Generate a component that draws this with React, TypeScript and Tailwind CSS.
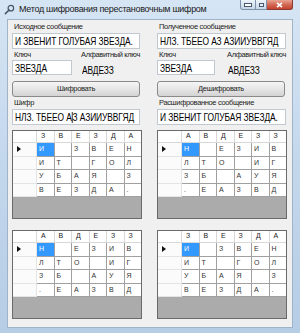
import React from 'react';

const font = { fontFamily: '"Liberation Sans", Arial, sans-serif' };

interface GridProps {
    headers: string[];
    rows: string[][];
}

const CipherGrid: React.FC<GridProps> = ({ headers, rows }) => {
    return (
        <div className="h-[89px] w-[130px] border border-[#6a6a6a] bg-[#ababab] flex flex-col overflow-hidden">
            <div className="flex h-[12px] bg-white text-[7px] text-[#222]">
                <div className="w-[24px] border-r border-b border-[#d8d8d8]"></div>
                {headers.map((h, i) => (
                    <div key={i} className="flex-1 flex items-center pl-[4px] border-r border-b border-[#d8d8d8] last:border-r-0">
                        {h}
                    </div>
                ))}
            </div>
            {rows.map((row, r) => (
                <div key={r} className="flex h-[13.5px] bg-white text-[7px] text-[#333]">
                    <div className="w-[24px] flex items-center pl-[4px] border-r border-b border-[#e4e4e4] bg-[#fbfbfb]">
                        {r === 0 && (
                            <svg width="4" height="6" viewBox="0 0 4 6">
                                <path d="M0 0 L4 3 L0 6 Z" fill="#111" />
                            </svg>
                        )}
                    </div>
                    {row.map((c, i) => {
                        const selected = r === 0 && i === 0;
                        return (
                            <div
                                key={i}
                                className={
                                    selected
                                        ? 'flex-1 flex items-center pl-[2px] border-r border-b border-[#a0a0a0] bg-[#3399ff] text-white'
                                        : 'flex-1 flex items-center pl-[2px] border-r border-b border-[#a0a0a0] last:border-r-0'
                                }
                            >
                                {c}
                            </div>
                        );
                    })}
                </div>
            ))}
        </div>
    );
};

const Label: React.FC<{ children: React.ReactNode; className?: string }> = ({ children, className }) => (
    <div className={'text-[7.5px] leading-[10px] text-[#222] tracking-[-0.35px] whitespace-nowrap ' + (className || '')}>{children}</div>
);

// the original window text is horizontally squeezed, so the big text is narrowed with scale-x
const Squeezed: React.FC<{ children: React.ReactNode }> = ({ children }) => (
    <span className="inline-block origin-left scale-x-[0.8] text-[10.5px] leading-[12px] tracking-[-0.1px] whitespace-nowrap">{children}</span>
);

const TextBox: React.FC<{ value: string; className?: string; caretAt?: number }> = ({ value, className, caretAt }) => (
    <div className={'bg-white border border-[#c2c8d0] flex items-center pl-[2px] text-black leading-[12px] overflow-hidden ' + (className || '')}>
        <Squeezed>
            {caretAt !== undefined ? (
                <>
                    {value.slice(0, caretAt)}
                    <span className="inline-block w-[1px] h-[11px] bg-black align-middle"></span>
                    {value.slice(caretAt)}
                </>
            ) : (
                value
            )}
        </Squeezed>
    </div>
);

const WinButton: React.FC<{ children: React.ReactNode }> = ({ children }) => (
    <div className="h-[16px] w-[128px] rounded-[3px] border border-[#8a8a8a] bg-gradient-to-b from-[#f6f6f6] via-[#e6e6e6] to-[#d3d3d3] flex items-center justify-center text-[7.5px] leading-[10px] text-[#222] tracking-[-0.3px]">
        {children}
    </div>
);

const grid1 = {
    headers: ['З', 'В', 'Е', 'З', 'Д', 'А'],
    rows: [
        ['И', '', 'З', 'В', 'Е', 'Н'],
        ['И', 'Т', '', 'Г', 'О', 'Л'],
        ['У', 'Б', 'А', 'Я', '', 'З'],
        ['В', 'Е', 'З', 'Д', 'А', '.'],
    ],
};

const grid2 = {
    headers: ['А', 'В', 'Д', 'Е', 'З', 'З'],
    rows: [
        ['Н', '', 'Е', 'З', 'И', 'В'],
        ['Л', 'Т', 'О', '', 'И', 'Г'],
        ['З', 'Б', '', 'А', 'У', 'Я'],
        ['.', 'Е', 'А', 'З', 'В', 'Д'],
    ],
};

export default function App() {
    return (
        <div style={font} className="w-[300px] h-[333px] flex flex-col bg-gradient-to-b from-[#d6e5f4] via-[#c3d7ec] to-[#b6cde6] overflow-hidden">
            {/* title bar */}
            <div className="h-[19px] flex items-start relative">
                <div className="flex items-center h-[18px] pl-[4px] gap-[4px]">
                    <svg width="11" height="11" viewBox="0 0 12 12">
                        <circle cx="7.5" cy="4.5" r="3" fill="none" stroke="#445566" strokeWidth="1.3" />
                        <path d="M5.5 6.5 L1.5 10.5" stroke="#445566" strokeWidth="1.6" strokeLinecap="round" />
                    </svg>
                    <span className="text-[9px] leading-[12px] text-[#1a1a1a] tracking-[-0.3px]">Метод шифрования перестановочным шифром</span>
                </div>
                <div className="absolute top-0 left-[240px] flex">
                    <div className="w-[16px] h-[10px] rounded-bl-[3px] border border-t-0 border-[#7f93ab] bg-gradient-to-b from-[#eef4fa] to-[#c6d6e8] flex items-end justify-center pb-[2px]">
                        <div className="w-[6px] h-[2px] bg-white border border-[#4a5a6e] box-content"></div>
                    </div>
                    <div className="w-[11px] h-[10px] border border-t-0 border-l-0 border-[#7f93ab] bg-gradient-to-b from-[#eef4fa] to-[#c6d6e8] flex items-center justify-center">
                        <div className="w-[5px] h-[4px] border border-[#4a5a6e] bg-[#e9eff6]"></div>
                    </div>
                    <div className="w-[26px] h-[10px] rounded-br-[3px] border border-t-0 border-l-0 border-[#8a3b33] bg-gradient-to-b from-[#e8a493] via-[#d26a55] to-[#c5402d] flex items-center justify-center">
                        <svg width="7" height="6" viewBox="0 0 7 6">
                            <path d="M1 0.8 L6 5.2 M6 0.8 L1 5.2" stroke="white" strokeWidth="1.6" />
                        </svg>
                    </div>
                </div>
            </div>

            {/* client area */}
            <div className="flex-1 mx-[7px] mb-[5px] bg-[#f0f0f0] border border-[#9fb3c9] pl-[4px] pt-[2px] flex flex-col">
                <div className="flex gap-[16px]">
                    {/* left column */}
                    <div className="w-[129px] flex flex-col">
                        <Label className="pl-[2px] h-[11px]">Исходное сообщение</Label>
                        <TextBox value="И ЗВЕНИТ ГОЛУБАЯ ЗВЕЗДА." className="h-[16px] w-[128px]" />
                        <div className="flex mt-[1px]">
                            <Label className="w-[69px] pl-[2px] h-[10px]">Ключ</Label>
                            <Label className="h-[10px]">Алфавитный ключ</Label>
                        </div>
                        <div className="flex items-center h-[15px]">
                            <TextBox value="ЗВЕЗДА" className="h-[15px] w-[60px]" />
                            <div className="ml-[10px] leading-[12px] pt-[3px]">
                                <Squeezed>АВДЕЗЗ</Squeezed>
                            </div>
                        </div>
                        <div className="mt-[6px]">
                            <WinButton>Шифровать</WinButton>
                        </div>
                        <Label className="pl-[2px] h-[12px] pt-[1px]">Шифр</Label>
                        <TextBox value="НЛЗ. ТБЕЕО АЗ АЗИИУВВГЯД" caretAt={12} className="h-[16px] w-[128px]" />
                    </div>
                    {/* right column */}
                    <div className="w-[129px] flex flex-col">
                        <Label className="pl-[2px] h-[11px]">Полученное сообщение</Label>
                        <TextBox value="НЛЗ. ТБЕЕО АЗ АЗИИУВВГЯД" className="h-[16px] w-[129px]" />
                        <div className="flex mt-[1px]">
                            <Label className="w-[70px] pl-[2px] h-[10px]">Ключ</Label>
                            <Label className="h-[10px]">Алфавитный ключ</Label>
                        </div>
                        <div className="flex items-center h-[15px]">
                            <TextBox value="ЗВЕЗДА" className="h-[15px] w-[58px]" />
                            <div className="ml-[13px] leading-[12px] pt-[3px]">
                                <Squeezed>АВДЕЗЗ</Squeezed>
                            </div>
                        </div>
                        <div className="mt-[6px]">
                            <WinButton>Дешифровать</WinButton>
                        </div>
                        <Label className="pl-[2px] h-[12px] pt-[1px]">Расшифрованное сообщение</Label>
                        <TextBox value="И ЗВЕНИТ ГОЛУБАЯ ЗВЕЗДА." className="h-[16px] w-[129px]" />
                    </div>
                </div>

                <div className="flex gap-[15px] mt-[5px]">
                    <CipherGrid {...grid1} />
                    <CipherGrid {...grid2} />
                </div>
                <div className="flex gap-[15px] mt-[11px]">
                    <CipherGrid {...grid2} />
                    <CipherGrid {...grid1} />
                </div>
            </div>
        </div>
    );
}
